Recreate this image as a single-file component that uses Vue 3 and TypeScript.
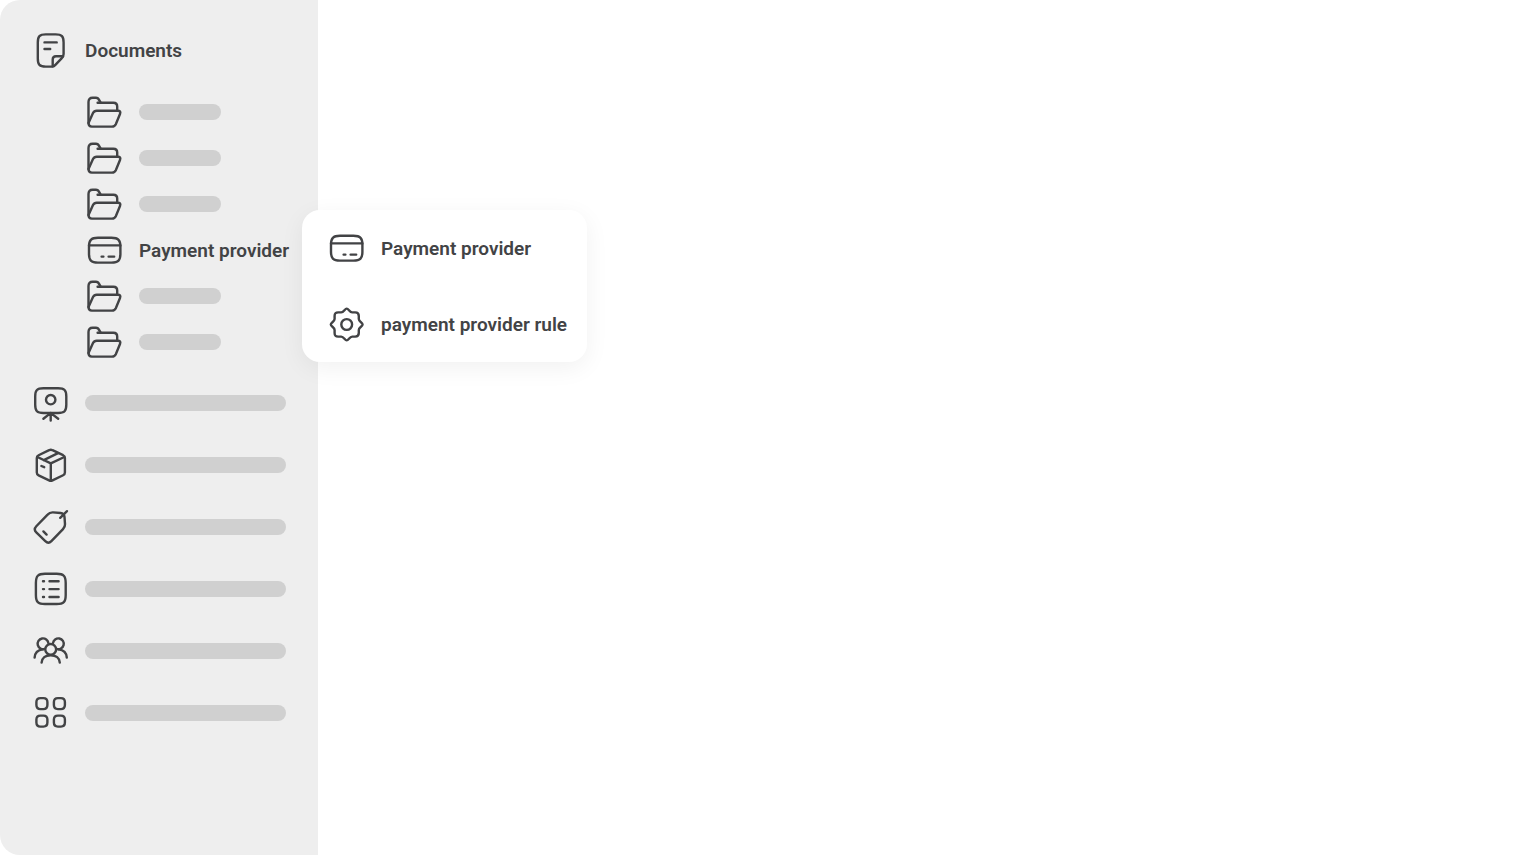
<script setup lang="ts">
interface IconShape {
  paths: string[]
}

const gearOutline = [
  'M17.7 2.6C19.6 2.6 20.5 6.4 23.2 6.4H26.2C28.8 6.4 29.8 7.4 29.8 10V13C29.8 15.7 33.6 16.6 33.6 18.5',
  'C33.6 20.4 29.8 21.3 29.8 24V27C29.8 29.6 28.8 30.6 26.2 30.6H23.2C20.5 30.6 19.6 34.4 17.7 34.4',
  'C15.8 34.4 14.9 30.6 12.2 30.6H9.2C6.6 30.6 5.6 29.6 5.6 27V24C5.6 21.3 1.8 20.4 1.8 18.5',
  'C1.8 16.6 5.6 15.7 5.6 13V10C5.6 7.4 6.6 6.4 9.2 6.4H12.2C14.9 6.4 15.8 2.6 17.7 2.6Z',
]

const circle = (cx: number, cy: number, r: number): string =>
  `M${cx - r} ${cy}a${r} ${r} 0 1 1 ${2 * r} 0a${r} ${r} 0 1 1 ${-2 * r} 0Z`

const tile = (x: number, y: number): string =>
  `M${x + 4} ${y}h3q4 0 4 4v3q0 4-4 4h-3q-4 0-4-4v-3q0-4 4-4Z`

const icons: Record<string, IconShape> = {
  document: {
    paths: [
      'M19.6 34.6H12.8C6.5 34.6 4.8 32.6 4.8 26.4V10.6C4.8 4.4 6.5 2.4 12.8 2.4H22.6C28.9 2.4 30.6 4.4 30.6 10.6V22C30.6 24 30 25 28.6 26.4L22.4 32.9C21.4 34 20.8 34.6 19.6 34.6Z',
      'M19.7 34.2V27.6Q19.7 24.2 23 24.2H30',
      'M11.5 10.4H23.7M11.5 17H17.2',
    ],
  },
  folder: {
    paths: [
      'M1.5 29V8Q1.5 3.8 5.6 3.8H9C12 3.8 12 6.4 13.8 8.8',
      'M10.6 8.8H26.4Q30.2 8.8 30.2 12.6V16.4',
      'M1.5 29L6 19Q7.1 16.7 9.7 16.7H30.6Q34.3 16.7 33 20L28.8 30.2Q27.7 32.6 25 32.6H4.8Q1.5 32.6 1.5 29Z',
    ],
  },
  card: {
    paths: [
      'M11 5.8H24.4C31.4 5.8 33.4 8.4 33.4 14.4V22C33.4 28 31.4 30.6 24.4 30.6H11C4 30.6 2 28 2 22V14.4C2 8.4 4 5.8 11 5.8Z',
      'M2 13.4H33.4M14.6 24.6H16.4M21.6 24.6H27.2',
    ],
  },
  gear: { paths: [gearOutline.join(''), circle(17.7, 18.5, 5.4)] },
  board: {
    paths: [
      'M10.4 3.2H25.1C31.5 3.2 33.3 5.2 33.3 11.4V19.8C33.3 26 31.5 28 25.1 28H10.4C4 28 2.2 26 2.2 19.8V11.4C2.2 5.2 4 3.2 10.4 3.2Z',
      circle(17.7, 14.7, 4.7),
      'M17.7 28V35.6M17.2 28.4L10.4 33.8M18.2 28.4L25.2 33.8',
    ],
  },
  box: {
    paths: [
      'M16.1 3.2Q17.8 2.3 19.5 3.2L30.1 8.2Q31.9 9.1 31.9 11V25.4Q31.9 27.4 30.1 28.3L19.5 33.4Q17.8 34.2 16.1 33.4L5.6 28.3Q3.8 27.4 3.8 25.4V11Q3.8 9.1 5.6 8.2Z',
      'M4.4 10L17.8 16.4L31.3 10M17.8 16.4V33.6M10.8 13.2L25 6.2M8.4 19L11.2 20.2',
    ],
  },
  tag: {
    paths: [
      'M20 3.4L27.6 4Q31.2 4.3 31.5 7.8L32 15.2Q32.1 18 30 20.2L18.4 32.2Q15.4 35.2 12.3 32.2L3.3 23.4Q.3 20.4 3.3 17.2L14.6 5.6Q16.8 3.2 20 3.4Z',
      'M27.2 8.8L34 2.2M10.4 22.4L13.6 25.6',
    ],
  },
  list: {
    paths: [
      'M12 2.8H23.7C30.6 2.8 32.7 4.9 32.7 12V24C32.7 31 30.6 33 23.7 33H12C5 33 2.9 31 2.9 24V12C2.9 4.9 5 2.8 12 2.8Z',
      'M10 10.2H11M16.5 10.2H25.6M10 18.1H11M16.5 18.1H25.6M10 26H11M16.5 26H25.6',
    ],
  },
  users: {
    paths: [
      circle(17.7, 16.4, 5.4),
      'M8.6 29.6C8.9 25 12.4 22.2 17.7 22.2S26.5 25 26.8 29.6',
      'M11.8 15.9A5.4 5.4 0 1 1 15.4 10.2M23.6 15.9A5.4 5.4 0 1 0 20 10.2',
      'M1.6 24.6C1.9 20 4.6 17 9.8 16.4M33.8 24.6C33.5 20 30.8 17 25.6 16.4',
    ],
  },
  grid: { paths: [tile(3.4, 3.1), tile(20.9, 3.1), tile(3.4, 20.6), tile(20.9, 20.6)] },
}

interface SubItem {
  id: number
  icon: string
  label?: string
}

const subItems: SubItem[] = [
  { id: 1, icon: 'folder' },
  { id: 2, icon: 'folder' },
  { id: 3, icon: 'folder' },
  { id: 4, icon: 'card', label: 'Payment provider' },
  { id: 5, icon: 'folder' },
  { id: 6, icon: 'folder' },
]

const sections: string[] = ['board', 'box', 'tag', 'list', 'users', 'grid']

const flyout = [
  { icon: 'card', label: 'Payment provider' },
  { icon: 'gear', label: 'payment provider rule' },
]
</script>

<template>
  <div class="page">
    <nav class="sidebar">
      <a href="#" class="row">
        <svg class="icon" viewBox="0 0 36 36"><path v-for="d in icons.document.paths" :key="d" :d="d" /></svg>
        <span class="label">Documents</span>
      </a>

      <ul class="sub">
        <li v-for="item in subItems" :key="item.id" class="sub-item">
          <a href="#" class="row">
            <svg class="icon" viewBox="0 0 36 36"><path v-for="d in icons[item.icon].paths" :key="d" :d="d" /></svg>
            <span v-if="item.label" class="label">{{ item.label }}</span>
            <span v-else class="bar short"></span>
          </a>
          <div v-if="item.label" class="flyout">
            <a v-for="entry in flyout" :key="entry.label" href="#" class="row entry">
              <svg class="icon" viewBox="0 0 36 36"><path v-for="d in icons[entry.icon].paths" :key="d" :d="d" /></svg>
              <span class="label">{{ entry.label }}</span>
            </a>
          </div>
        </li>
      </ul>

      <ul class="sections">
        <li v-for="name in sections" :key="name">
          <a href="#" class="row">
            <svg class="icon" viewBox="0 0 36 36"><path v-for="d in icons[name].paths" :key="d" :d="d" /></svg>
            <span class="bar"></span>
          </a>
        </li>
      </ul>
    </nav>
    <main class="content"></main>
  </div>
</template>

<style>
body {
  background: #fff;
}
</style>

<style scoped>
.page {
  display: flex;
  min-height: 100vh;
  background: #fff;
  color: #424345;
  font-family: Roboto, "Liberation Sans", sans-serif;
  font-size: 19px;
  font-weight: 600;
  line-height: 24px;
}

.sidebar {
  box-sizing: border-box;
  flex: none;
  width: 318px;
  padding: 32px 32px 32px 33px;
  background: #eee;
  border-radius: 20px 0 0 20px;
}

.content {
  flex: 1;
}

ul {
  margin: 0;
  padding: 0;
  list-style: none;
}

.row {
  display: flex;
  align-items: center;
  gap: 16px;
  height: 36px;
  color: inherit;
  text-decoration: none;
  white-space: nowrap;
}

.label {
  padding-top: 2px;
}

.icon {
  flex: none;
  width: 36px;
  height: 36px;
  overflow: visible;
  fill: none;
  stroke: currentColor;
  stroke-width: 2.4;
  stroke-linecap: round;
  stroke-linejoin: round;
}

.bar {
  flex: 1;
  height: 16px;
  border-radius: 8px;
  background: #d0d0d0;
}

.bar.short {
  flex: none;
  width: 82px;
}

.sub {
  display: flex;
  flex-direction: column;
  gap: 10px;
  margin: 26px 0 25px;
  padding-left: 54px;
}

.sub-item {
  position: relative;
}

.sections {
  display: flex;
  flex-direction: column;
  gap: 26px;
}

.flyout {
  position: absolute;
  top: -22px;
  left: 215px;
  z-index: 1;
  padding: 0 20px 0 27px;
  border-radius: 18px;
  background: #fff;
  box-shadow: 0 6px 24px rgba(0, 0, 0, 0.06);
}

.entry {
  height: 76px;
}
</style>
